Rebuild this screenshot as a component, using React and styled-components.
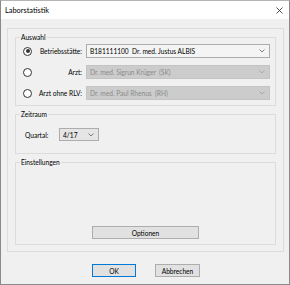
import React from "react";
import styled, { createGlobalStyle } from "styled-components";

const GlobalStyle = createGlobalStyle`
  html, body {
    margin: 0;
    padding: 0;
    background: #f0f0f0;
  }
  * {
    box-sizing: border-box;
  }
`;

const Chevron = ({ disabled }) => (
  <svg width="6" height="4" viewBox="0 0 6 4">
    <polyline
      points="0.5,0.5 3,3 5.5,0.5"
      fill="none"
      stroke={disabled ? "#a0a0a0" : "#606060"}
      strokeWidth="0.8"
    />
  </svg>
);

const CloseIcon = () => (
  <svg width="7" height="7" viewBox="0 0 7 7">
    <path d="M0.5 0.5 L6.5 6.5 M6.5 0.5 L0.5 6.5" stroke="#222" strokeWidth="0.8" />
  </svg>
);

const Radio = ({ checked }) => (
  <RadioCircle>{checked && <RadioDot />}</RadioCircle>
);

export default function App() {
  return (
    <>
      <GlobalStyle />
      <Window>
        <TitleBar>
          <Title>Laborstatistik</Title>
          <CloseIcon />
        </TitleBar>
        <Body>
          <Panel>
            <Group $height={69} $pad="6px 5px 5px 7px">
              <Legend>Auswahl</Legend>
              <Rows>
                <Row>
                  <Radio checked />
                  <RowLabel>Betriebsstätte:</RowLabel>
                  <Select $wide>
                    <span>B181111100&nbsp;&nbsp;Dr. med. Justus ALBIS</span>
                    <Chevron />
                  </Select>
                </Row>
                <Row>
                  <Radio />
                  <RowLabel>Arzt:</RowLabel>
                  <Select $wide $disabled>
                    <span>Dr. med. Sigrun Krüger&nbsp;&nbsp;(SK)</span>
                    <Chevron disabled />
                  </Select>
                </Row>
                <Row>
                  <Radio />
                  <RowLabel>Arzt ohne RLV:</RowLabel>
                  <Select $wide $disabled>
                    <span>Dr. med. Paul Rhenus&nbsp;&nbsp;(RH)</span>
                    <Chevron disabled />
                  </Select>
                </Row>
              </Rows>
            </Group>
            <Group $height={40} $pad="13px 5px 5px 9px">
              <Legend>Zeitraum</Legend>
              <QuartalRow>
                <FieldLabel>Quartal:</FieldLabel>
                <Select $quartal>
                  <span>4/17</span>
                  <Chevron />
                </Select>
              </QuartalRow>
            </Group>
            <Group $height={83} $pad="0 5px 5px 5px" $bottom>
              <Legend>Einstellungen</Legend>
              <Button $width={107}>Optionen</Button>
            </Group>
          </Panel>
          <Footer>
            <Button $width={44} $default>
              OK
            </Button>
            <Button $width={45}>Abbrechen</Button>
          </Footer>
        </Body>
      </Window>
    </>
  );
}

const Window = styled.div`
  width: 290px;
  height: 285px;
  display: flex;
  flex-direction: column;
  border: 1px solid #8a8a8a;
  border-top-color: #b5b5b5;
  background: #f0f0f0;
  font-family: Lato, "Noto Sans", sans-serif;
  font-size: 6.6px;
  color: #000000;
`;

const TitleBar = styled.div`
  height: 18px;
  background: #ffffff;
  display: flex;
  align-items: center;
  justify-content: space-between;
  padding: 0 6px 0 4px;
`;

const Title = styled.div`
  font-size: 7.4px;
  color: #000000;
`;

const Body = styled.div`
  flex: 1;
  display: flex;
  flex-direction: column;
  padding: 9px 5px 0 6px;
`;

const Panel = styled.div`
  height: 224px;
  border: 1px solid #dcdcdc;
  padding: 8px 7px 5px 7px;
  display: flex;
  flex-direction: column;
  gap: 8px;
`;

const Group = styled.div`
  position: relative;
  height: ${(p) => p.$height}px;
  border: 1px solid #dcdcdc;
  padding: ${(p) => p.$pad};
  display: flex;
  flex-direction: column;
  justify-content: ${(p) => (p.$bottom ? "flex-end" : "flex-start")};
  align-items: ${(p) => (p.$bottom ? "center" : "stretch")};
`;

const Legend = styled.span`
  position: absolute;
  top: -5px;
  left: 4px;
  padding: 0 1px;
  line-height: 9px;
  background: #f0f0f0;
  color: #000000;
`;

const Rows = styled.div`
  display: flex;
  flex-direction: column;
  gap: 7px;
`;

const Row = styled.div`
  height: 14px;
  display: flex;
  align-items: center;
`;

const RadioCircle = styled.div`
  width: 9px;
  height: 9px;
  flex-shrink: 0;
  border-radius: 50%;
  border: 1px solid #333333;
  background: #ffffff;
  display: flex;
  align-items: center;
  justify-content: center;
`;

const RadioDot = styled.div`
  width: 4px;
  height: 4px;
  border-radius: 50%;
  background: #333333;
`;

const RowLabel = styled.div`
  width: 50px;
  text-align: right;
  margin-right: 4px;
  white-space: nowrap;
`;

const Select = styled.div`
  height: ${(p) => (p.$quartal ? 13 : 14)}px;
  width: ${(p) => (p.$quartal ? "40px" : "auto")};
  flex: ${(p) => (p.$wide ? 1 : "none")};
  display: flex;
  align-items: center;
  justify-content: space-between;
  padding: 0 4px 0 3px;
  border: 1px solid ${(p) => (p.$disabled ? "#c4c4c4" : "#adadad")};
  background: ${(p) =>
    p.$disabled ? "#cccccc" : p.$quartal ? "#e5e5e5" : "#f4f4f4"};
  color: ${(p) => (p.$disabled ? "#8a8a8a" : "#000000")};
  white-space: nowrap;
`;

const QuartalRow = styled.div`
  display: flex;
  align-items: center;
`;

const FieldLabel = styled.div`
  width: 34px;
`;

const Button = styled.div`
  width: ${(p) => p.$width}px;
  height: 13px;
  display: flex;
  align-items: center;
  justify-content: center;
  border: 1px solid ${(p) => (p.$default ? "#0078d7" : "#adadad")};
  background: #e1e1e1;
  color: #000000;
`;

const Footer = styled.div`
  display: flex;
  justify-content: center;
  gap: 19px;
  padding: 12px 0 0 0;
  margin-left: 1px;
`;
